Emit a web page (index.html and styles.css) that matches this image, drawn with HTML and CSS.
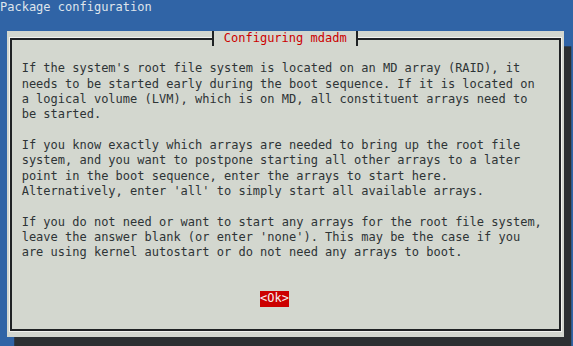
FILE: index.html
```html
<!DOCTYPE html>
<html>
<head>
  <title>Package configuration</title>
  <link rel="stylesheet" href="styles.css">
</head>
<body>
  <div class="backtitle">Package configuration</div>
  <div class="dialog">
    <div class="frame">
      <span class="frame-title">Configuring mdadm</span>
      <p>If the system's root file system is located on an MD array (RAID), it<br>needs to be started early during the boot sequence. If it is located on<br>a logical volume (LVM), which is on MD, all constituent arrays need to<br>be started.</p>
      <p>If you know exactly which arrays are needed to bring up the root file<br>system, and you want to postpone starting all other arrays to a later<br>point in the boot sequence, enter the arrays to start here.<br>Alternatively, enter 'all' to simply start all available arrays.</p>
      <p class="last">If you do not need or want to start any arrays for the root file system,<br>leave the answer blank (or enter 'none'). This may be the case if you<br>are using kernel autostart or do not need any arrays to boot.</p>
      <div class="buttons">
        <button class="button">&lt;Ok&gt;</button>
      </div>
    </div>
  </div>
</body>
</html>
```

FILE: styles.css
```css
* {
  margin: 0;
  padding: 0;
  box-sizing: border-box;
}

html, body {
  width: 100%;
  height: 100%;
  overflow: hidden;
}

body {
  background: #3064a6;
  font-family: "DejaVu Sans Mono", "Liberation Mono", monospace;
  font-size: 12px;
  line-height: 15.33px;
  color: #2e3436;
}

.backtitle {
  height: 15.33px;
  margin-bottom: 15.34px;
  color: #dfe4ec;
  white-space: nowrap;
}

.dialog {
  display: flex;
  flex-direction: column;
  margin-left: 1ch;
  width: 77ch;
  height: 306.67px;
  padding: 7.33px 2.2px 6.33px 2.8px;
  background: #d3d7cf;
  box-shadow: 1ch 15.33px 0 #2c3032;
}

.frame {
  flex: 1;
  position: relative;
  border: 2px solid #1f2224;
  box-shadow: 0 0 0 1px #f2f3ef;
  padding: 21.33px 0 0 9.66px;
  white-space: nowrap;
}

/* title sits on top of the frame line */
.frame-title {
  position: absolute;
  left: 200.4px;
  top: -9.33px;
  height: 15.33px;
  padding: 0 9.6px 0 9.4px;
  border-left: 2px solid #1f2224;
  border-right: 2px solid #1f2224;
  background: #d3d7cf;
  color: #cc0000;
}

.frame p {
  margin-bottom: 15.33px;
}

.frame p.last {
  margin-bottom: 30.67px;
}

.buttons {
  display: flex;
  padding-left: 33ch;
}

.button {
  font: inherit;
  line-height: 15.33px;
  height: 15.33px;
  width: 4ch;
  border: none;
  background: #cc0000;
  color: #f6eeee;
}
```
